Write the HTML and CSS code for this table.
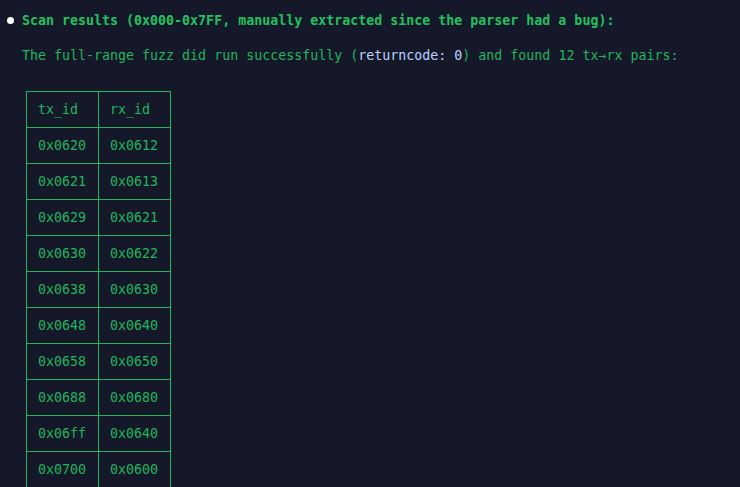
FILE: index.html
```html
<!DOCTYPE html>
<html lang="en">
<head>
    <meta charset="UTF-8">
    <title>Scan results</title>
    <link rel="stylesheet" href="styles.css">
</head>
<body>
    <div class="entry">
        <div class="heading"><span class="dot"></span>Scan results (0x000-0x7FF, manually extracted since the parser had a bug):</div>
        <p class="note">The full-range fuzz did run successfully (<span class="code">returncode: 0</span>) and found 12 tx→rx pairs:</p>
        <table class="pairs">
            <tr><th>tx_id</th><th>rx_id</th></tr>
            <tr><td>0x0620</td><td>0x0612</td></tr>
            <tr><td>0x0621</td><td>0x0613</td></tr>
            <tr><td>0x0629</td><td>0x0621</td></tr>
            <tr><td>0x0630</td><td>0x0622</td></tr>
            <tr><td>0x0638</td><td>0x0630</td></tr>
            <tr><td>0x0648</td><td>0x0640</td></tr>
            <tr><td>0x0658</td><td>0x0650</td></tr>
            <tr><td>0x0688</td><td>0x0680</td></tr>
            <tr><td>0x06ff</td><td>0x0640</td></tr>
            <tr><td>0x0700</td><td>0x0600</td></tr>
        </table>
    </div>
</body>
</html>
```

FILE: styles.css
```css
html, body {
    margin: 0;
    background: #141829;
}
body {
    font-family: "DejaVu Sans Mono", monospace;
    font-size: 13.3px;
    color: #22b55c;
    overflow: hidden;
}
.entry {
    padding: 12px 0 0 22px;
}
.heading {
    position: relative;
    font-weight: bold;
    color: #22c05f;
    line-height: 18px;
}
.dot {
    position: absolute;
    left: -15px;
    top: 5px;
    width: 7px;
    height: 7px;
    border-radius: 50%;
    background: #ffffff;
}
.note {
    margin: 17px 0 0;
    line-height: 18px;
}
.code {
    color: #bcd3ff;
}
.pairs {
    margin: 26px 0 0 4px;
    border-collapse: collapse;
}
.pairs th, .pairs td {
    border: 1px solid #22b55c;
    height: 35px;
    padding: 0 11px;
    text-align: left;
    font-weight: normal;
    width: 49px;
}
```
